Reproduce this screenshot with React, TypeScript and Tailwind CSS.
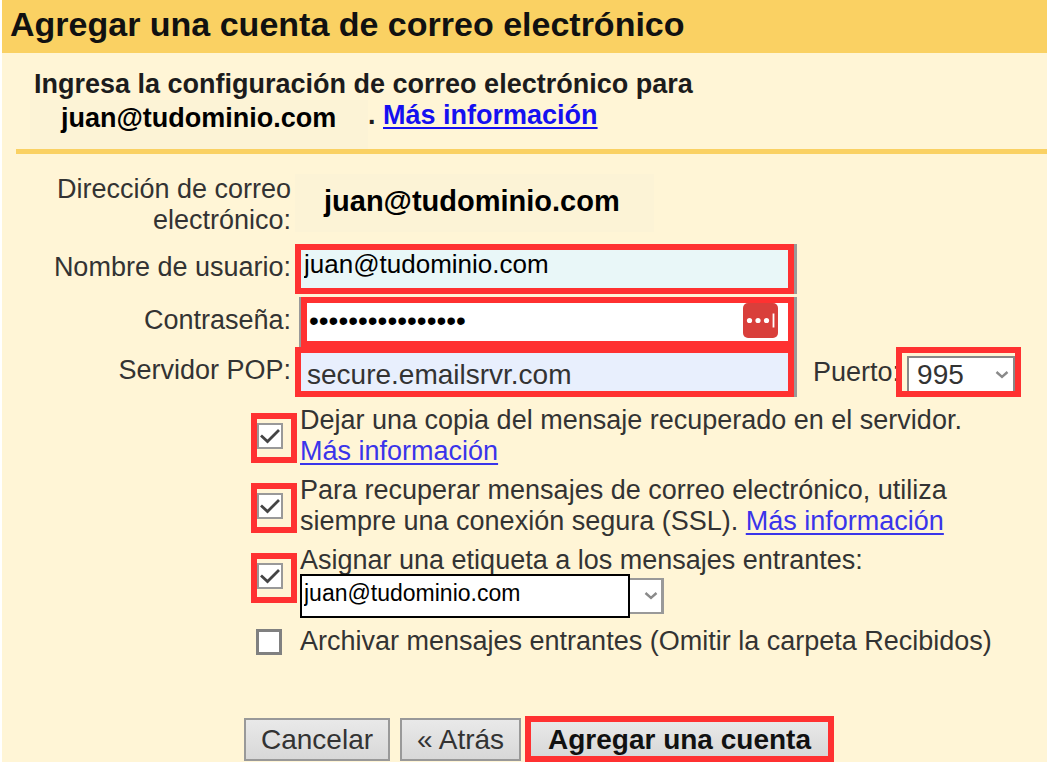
import { useState } from 'react';
import type { ReactNode } from 'react';
import clsx from 'clsx';

const EMAIL = 'juan@tudominio.com';

function Chevron({ className }: { className?: string }) {
  return (
    <svg
      viewBox="0 0 14 10"
      className={clsx('pointer-events-none absolute w-[14px] h-[10px]', className)}
      fill="none"
      stroke="#8a8a8a"
      strokeWidth="2.4"
    >
      <path d="M1.5 2 L7 7 L12.5 2" />
    </svg>
  );
}

function MoreInfo() {
  return (
    <a href="#" className="text-[#3a34ea] underline decoration-2 underline-offset-3">
      Más información
    </a>
  );
}

interface FieldProps {
  id: string;
  label: string;
  children: ReactNode;
  extra?: ReactNode;
  inset?: boolean;
}

function Field({ id, label, children, extra, inset }: FieldProps) {
  return (
    <div className="grid grid-cols-[289px_minmax(0,502px)_1fr] gap-x-1">
      <label htmlFor={id} className="self-center pb-1 text-right">
        {label}
      </label>
      <div className={clsx('flex border-r-3 border-[#999]', inset && 'ml-1 border-l-2')}>
        <div className="relative flex h-[50px] min-w-0 flex-1 border-6 border-[#ff3131]">{children}</div>
      </div>
      <div className="flex items-center pl-3">{extra}</div>
    </div>
  );
}

interface OptionProps {
  id: string;
  checked: boolean;
  framed?: boolean;
  onChange: (checked: boolean) => void;
  children: ReactNode;
}

function Option({ id, checked, framed, onChange, children }: OptionProps) {
  return (
    <div className="flex gap-[3px]">
      <div
        className={clsx(
          'flex w-[46px] shrink-0 items-start',
          framed ? 'mt-2 h-[50px] border-6 border-[#ff3131] pt-1' : 'pt-[3px] pl-[5px]'
        )}
      >
        <span className="relative flex">
          <input
            id={id}
            type="checkbox"
            checked={checked}
            onChange={(e) => onChange(e.target.checked)}
            className={clsx(
              'size-[26px] appearance-none bg-white',
              framed ? 'border-2 border-[#999]' : 'border-3 border-[#808080]'
            )}
          />
          {checked && (
            <svg
              viewBox="0 0 26 26"
              className="pointer-events-none absolute inset-0 size-[26px]"
              fill="none"
              stroke="#444"
              strokeWidth="2.8"
            >
              <path d="M4 12.5 L10.5 18.5 L22 7" />
            </svg>
          )}
        </span>
      </div>
      <div>{children}</div>
    </div>
  );
}

export default function App() {
  const [username, setUsername] = useState(EMAIL);
  const [password, setPassword] = useState('contrasena123456');
  const [server, setServer] = useState('secure.emailsrvr.com');
  const [options, setOptions] = useState({ copy: true, ssl: true, label: true, archive: false });

  const setOption = (name: keyof typeof options) => (checked: boolean) =>
    setOptions({ ...options, [name]: checked });

  return (
    <main className="min-h-screen border-l-2 border-white bg-[#fff5d6] font-['Liberation_Sans',Arial,sans-serif] text-[27px] leading-[31px] text-[#333]">
      <h1 className="bg-[#fad163] pt-1 pb-2 pl-2 text-[34px] leading-[41px] font-bold text-[#111]">
        Agregar una cuenta de correo electrónico
      </h1>

      <div className="ml-[14px] border-b-5 border-[#fad163] pt-4 pl-[18px] font-bold text-[#1c1c1c]">
        <p>Ingresa la configuración de correo electrónico para</p>
        <div className="flex">
          <span className="-ml-1 w-[338px] bg-[#fcf3d6] pt-[3px] pb-[15px] pl-[31px] text-black">{EMAIL}</span>
          <span>
            .{' '}
            <a href="#" className="text-[#1510f0] underline decoration-2 underline-offset-3">
              Más información
            </a>
          </span>
        </div>
      </div>

      <form onSubmit={(e) => e.preventDefault()}>
        <div className="grid grid-cols-[289px_1fr] gap-x-1 pt-5 pb-2">
          <div className="pl-10 text-right">Dirección de correo electrónico:</div>
          <div className="h-[58px] w-[359px] bg-[#fcf3d6] pt-3 pl-[29px] text-[29px] font-bold text-black">
            {EMAIL}
          </div>
        </div>

        <div className="flex flex-col">
          <Field id="username" label="Nombre de usuario:">
            <input
              id="username"
              value={username}
              onChange={(e) => setUsername(e.target.value)}
              className="w-full bg-[#e9f7f8] pb-[10px] pl-[3px] text-[26px] text-black outline-none"
            />
          </Field>
          <div className="mt-[3px]">
            <Field id="password" label="Contraseña:" inset>
              <input
                id="password"
                type="password"
                value={password}
                onChange={(e) => setPassword(e.target.value)}
                className="w-full bg-white pb-1 pl-[2px] text-[28px] text-black outline-none"
              />
              <svg viewBox="0 0 35 35" className="absolute top-0 right-[10px] size-[35px]">
                <rect width="35" height="35" rx="5" fill="#d93f3b" />
                <circle cx="6.5" cy="17.5" r="2.6" fill="#fff" />
                <circle cx="15" cy="17.5" r="2.6" fill="#fff" />
                <circle cx="23.5" cy="17.5" r="2.6" fill="#fff" />
                <path d="M30.5 10.5 V24.5" stroke="#fff" strokeWidth="1.8" />
              </svg>
            </Field>
          </div>
          <Field
            id="server"
            label="Servidor POP:"
            extra={
              <>
                <label htmlFor="port" className="-mr-1">
                  Puerto:
                </label>
                <div className="relative flex h-[50px] w-[125px] border-6 border-[#ff3131] bg-[#fff5d6] pt-[3px] pl-[5px]">
                  <select
                    id="port"
                    defaultValue="995"
                    className="w-full appearance-none border-2 border-b-0 border-[#888] bg-white pl-2 text-[28px] leading-[31px] outline-none"
                  >
                    <option>995</option>
                    <option>110</option>
                  </select>
                  <Chevron className="top-[17px] right-[6px]" />
                </div>
              </>
            }
          >
            <input
              id="server"
              value={server}
              onChange={(e) => setServer(e.target.value)}
              className="w-full bg-[#e8effd] pt-1 pl-[6px] text-[28px] outline-none"
            />
          </Field>
        </div>

        <div className="flex flex-col gap-2 pt-2 pl-[249px]">
          <Option id="copy" framed checked={options.copy} onChange={setOption('copy')}>
            <label htmlFor="copy">Dejar una copia del mensaje recuperado en el servidor.</label>
            <br />
            <MoreInfo />
          </Option>
          <Option id="ssl" framed checked={options.ssl} onChange={setOption('ssl')}>
            <label htmlFor="ssl">
              Para recuperar mensajes de correo electrónico, utiliza
              <br />
              siempre una conexión segura (SSL).
            </label>{' '}
            <MoreInfo />
          </Option>
          <Option id="label" framed checked={options.label} onChange={setOption('label')}>
            <label htmlFor="label" className="block h-[29px]">
              Asignar una etiqueta a los mensajes entrantes:
            </label>
            <div className="relative flex w-[364px] items-center">
              <select
                aria-label="Etiqueta"
                defaultValue={EMAIL}
                className="h-11 w-[330px] appearance-none border-2 border-black bg-white pb-[5px] pl-[2px] text-[23px] text-black outline-none"
              >
                <option>{EMAIL}</option>
              </select>
              <span className="h-9 flex-1 border-y-2 border-r-3 border-[#999] bg-white" />
              <Chevron className="top-[17px] right-[6px]" />
            </div>
          </Option>
          <Option id="archive" checked={options.archive} onChange={setOption('archive')}>
            <label htmlFor="archive">Archivar mensajes entrantes (Omitir la carpeta Recibidos)</label>
          </Option>
        </div>

        <div className="flex items-center pt-[59px] pl-[242px] text-[28px]">
          <button
            type="button"
            className="mr-[10px] h-[43px] w-[146px] border-2 border-[#999] bg-linear-to-b from-[#e9e9e9] to-[#d8d8d8]"
          >
            Cancelar
          </button>
          <button
            type="button"
            className="mr-1 h-[43px] w-[121px] border-2 border-[#999] bg-linear-to-b from-[#e9e9e9] to-[#d8d8d8]"
          >
            « Atrás
          </button>
          <button
            type="submit"
            className="h-[46px] w-[309px] border-6 border-[#ff3131] bg-linear-to-b from-[#e9e9e9] to-[#d8d8d8] font-bold text-[#111]"
          >
            Agregar una cuenta
          </button>
        </div>
      </form>
    </main>
  );
}
